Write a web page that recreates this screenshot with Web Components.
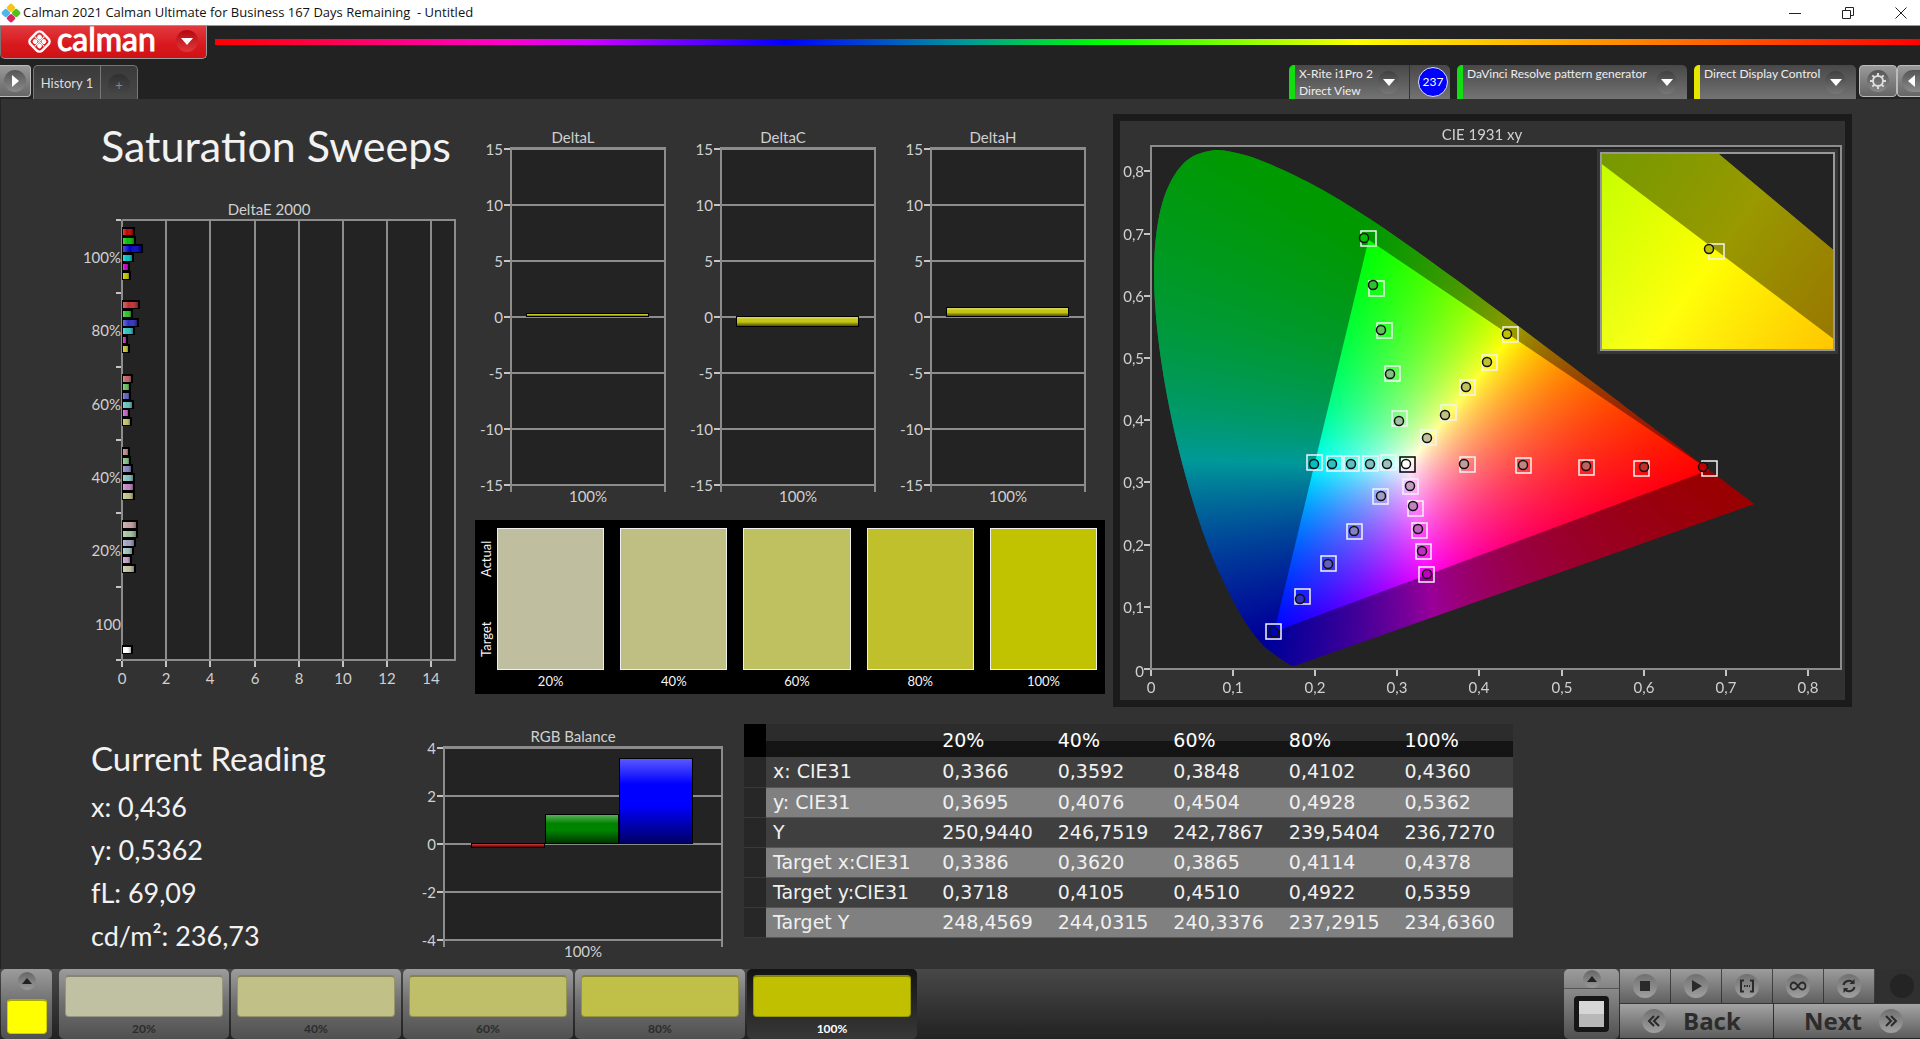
<!DOCTYPE html>
<html lang="en">
<head>
<meta charset="utf-8">
<title>Calman 2021 - Saturation Sweeps</title>
<style>
  body { margin: 0; background: #333; }
</style>
</head>
<body>
<cal-app></cal-app>
<script>
const UI = 'Lato, "Open Sans", sans-serif';

class CalElement extends HTMLElement {
  constructor() {
    super();
    this.attachShadow({ mode: 'open' });
  }
  connectedCallback() {
    this.shadowRoot.innerHTML = '<style>*{box-sizing:border-box}button{font:inherit;color:inherit;border:0;margin:0;padding:0;background:none}' +
      this.styles() + '</style>' + this.markup();
    this.ready();
  }
  styles() { return ''; }
  markup() { return ''; }
  ready() {}
}

/* colour of a sweep step: hue channels on/off, step 0 (20%) to 4 (100%) */
const HUES = { r: [1,0,0], g: [0,1,0], b: [0,0,1], c: [0,1,1], m: [1,0,1], y: [1,1,0] };
const REST = [158, 130, 96, 46, 0];
function sweep(hue, step) {
  if (hue === 'w') return 'rgb(255,255,255)';
  return 'rgb(' + HUES[hue].map(v => v ? 192 : REST[step]).join(',') + ')';
}

customElements.define('cal-titlebar', class extends CalElement {
  styles() { return `
    :host { display: flex; align-items: center; height: 26px; background: #fff; color: #111; border-bottom: 1px solid #999;
      box-sizing: content-box; font: 13px/25px "Open Sans", "Noto Sans", sans-serif; }
    .icon { margin: 0 2px 0 1px; display: block; }
    span { flex: 1; white-space: pre; }
    button { width: 53px; height: 25px; padding-right: 13px; display: grid; align-items: center; justify-items: end; }
  `; }
  markup() { return `
    <svg class="icon" width="20" height="20" viewBox="0 0 20 20">
      <rect x="6.500" y="1.300" width="7" height="7" rx="2" transform="rotate(45 10 4.800)" fill="#f5c518"/>
      <rect x="1.300" y="6.500" width="7" height="7" rx="2" transform="rotate(45 4.800 10)" fill="#4db8e8"/>
      <rect x="11.700" y="6.500" width="7" height="7" rx="2" transform="rotate(45 15.200 10)" fill="#4cc417"/>
      <rect x="6.500" y="11.700" width="7" height="7" rx="2" transform="rotate(45 10 15.200)" fill="#e0245e"/>
    </svg>
    <span>Calman 2021 Calman Ultimate for Business 167 Days Remaining  - Untitled</span>
    <button aria-label="Minimize"><svg width="12" height="12"><path d="M0 6.500H12" stroke="#222"/></svg></button>
    <button aria-label="Restore"><svg width="12" height="12" fill="none" stroke="#222"><path d="M.5 3.500H8.500V11.500H.5ZM3.500 3.500V.5H11.500V8.500H8.500"/></svg></button>
    <button aria-label="Close"><svg width="12" height="12" fill="none" stroke="#222"><path d="M.5.5 11.500 11.500M11.500.5.5 11.500"/></svg></button>
  `; }
});

customElements.define('cal-brandbar', class extends CalElement {
  styles() { return `
    :host { display: flex; align-items: flex-start; gap: 8px; height: 39px; background: #222; }
    button { flex: none; display: flex; align-items: center; width: 207px; height: 33px; padding: 0 8px 2px 25px; color: #fff;
      border: 1px solid #999; border-top: 0; border-left-color: #777; border-radius: 0 0 5px 5px;
      background: linear-gradient(#e23a3f, #d8181c 60%, #cf1216); font: 400 32px/32px Lato, sans-serif; }
    b { font-weight: 400; margin: 0 0 4px 4px; flex: 1; text-align: left; -webkit-text-stroke: 1px #fff; }
    i { width: 22px; height: 22px; border-radius: 50%; background: linear-gradient(#b3090d, #e0383c); display: grid; place-items: center; }
    .rainbow { flex: 1; height: 6px; margin-top: 13px;
      background: linear-gradient(90deg, #f00, #f0c 17%, #c0f 22%, #00f 33.500%, #099 44%, #0f0 52%, #ff0 67%, #f80 83%, #f00); }
  `; }
  markup() { return `
    <button aria-label="Calman menu">
      <svg width="27" height="27" viewBox="0 0 26 26">
        <g transform="rotate(45 13 13)" fill="#fff">
          <rect x="5" y="5" width="16" height="16" rx="4" fill="none" stroke="#fff" stroke-width="2.400"/>
          <circle cx="10" cy="10" r="2.300"/><circle cx="16" cy="10" r="2.300"/><circle cx="10" cy="16" r="2.300"/><circle cx="16" cy="16" r="2.300"/>
          <path d="M13 6.500V19.500M6.500 13H19.500" stroke="#fff" stroke-width="1"/>
        </g>
      </svg>
      <b>calman</b>
      <i><svg width="12" height="7"><path d="M0 0H12L6 7Z" fill="#fff"/></svg></i>
    </button>
    <div class="rainbow"></div>
  `; }
});

/* one device slot in the toolbar: coloured status strip, text, drop-down arrow */
customElements.define('cal-device', class extends CalElement {
  styles() { return `
    :host { display: flex; height: 34px; border-radius: 5px 5px 0 0; overflow: hidden; color: #eee;
      background: linear-gradient(#484848, #737373); border-left: 6px solid var(--status); font: 12px/17px ${UI}; }
    button { flex: 1; display: flex; justify-content: space-between; text-align: left; padding: 0 8px 0 4px; white-space: nowrap; }
    button { padding-right: 10px; }
    i { width: 21px; height: 23px; margin-top: 6px; border-radius: 50%; background: linear-gradient(#404040, #777); display: grid; place-items: center; }
  `; }
  markup() { return `
    <button><span><slot></slot></span><i><svg width="12" height="7"><path d="M0 0H12L6 7Z" fill="#fff"/></svg></i></button>
    <slot name="badge"></slot>
  `; }
});

customElements.define('cal-toolbar', class extends CalElement {
  styles() { return `
    :host { display: flex; align-items: flex-start; height: 34px; background: #222; color: #ddd; font: 13px/18px ${UI}; }
    .edge, .tool { display: grid; place-items: center; height: 32px; border: 1px solid #bbb; border-radius: 4px; background: linear-gradient(#999, #666); }
    .edge { width: 31px; border-left: 0; border-radius: 0 4px 4px 0; }
    .round { width: 22px; height: 22px; border-radius: 50%; background: linear-gradient(#555, #8a8a8a); display: grid; place-items: center; }
    .tabs { display: flex; height: 34px; margin-left: 2px; border: 1px solid #777; border-bottom: 0; border-radius: 5px 5px 0 0;
      background: linear-gradient(#3a3a3a, #484848); }
    .tabs button { width: 66px; }
    .tabs button + button { width: 37px; border-left: 1px solid #777; display: grid; place-items: center; }
    .tabs .round { background: linear-gradient(#303030, #484848); color: #888; margin-top: 5px; }
    .space { flex: 1; }
    .devices { display: flex; gap: 7px; }
    .meter { width: 161px; } .source { width: 230px; } .display { width: 162px; }
    .badge { flex: none; width: 41px; padding-left: 6px; border-left: 1px solid #333; display: grid; place-items: center; }
    .badge span { width: 30px; height: 30px; border-radius: 50%; border: 1px solid #ddf; background: #00f; color: #fff; font: 12px/28px ${UI}; text-align: center; }
    .gear { width: 38px; margin-left: 3px; }
    .last { width: 23px; border-right: 0; border-radius: 4px 0 0 4px; }
    .last .round { width: 18px; border-radius: 11px 0 0 11px; justify-self: end; }
  `; }
  markup() {
    let teeth = '';
    for (let a = 0; a < 360; a += 45) teeth += `<rect x="7" y="0" width="2" height="3" transform="rotate(${a} 8 8)" fill="#ddd"/>`;
    return `
    <button class="edge" aria-label="Expand"><span class="round"><svg width="7" height="12"><path d="M0 0 7 6 0 12Z" fill="#fff"/></svg></span></button>
    <div class="tabs"><button>History 1</button><button aria-label="Add tab"><span class="round">+</span></button></div>
    <div class="space"></div>
    <div class="devices">
      <cal-device class="meter" style="--status:#1d1">X-Rite i1Pro 2<br>Direct View<div slot="badge" class="badge"><span>237</span></div></cal-device>
      <cal-device class="source" style="--status:#1d1">DaVinci Resolve pattern generator</cal-device>
      <cal-device class="display" style="--status:#e6e600">Direct Display Control</cal-device>
    </div>
    <button class="tool gear" aria-label="Settings"><span class="round"><svg width="16" height="16">${teeth}<circle cx="8" cy="8" r="5" fill="none" stroke="#ddd" stroke-width="2"/></svg></span></button>
    <button class="tool last" aria-label="Collapse"><span class="round"><svg width="7" height="12"><path d="M7 0 0 6 7 12Z" fill="#fff"/></svg></span></button>
  `; }
});

const CHART = `
  :host { display: block; }
  svg { display: block; width: 100%; height: auto; font-family: ${UI}; font-size: 15px; fill: #d0d0d0; }
  line { stroke: #8c8c8c; stroke-width: 2; }
  .tick { stroke: #c4c4c4; }
  .end { text-anchor: end; } .mid { text-anchor: middle; }
`;

/* horizontal bars of DeltaE for each level */
customElements.define('cal-delta-e', class extends CalElement {
  styles() { return CHART; }
  markup() {
    const groups = [['100%', 4, [13,14,21,12,8,9]], ['80%', 3, [18,11,17,13,6,8]], ['60%', 2, [11,9,9,12,8,10]],
      ['40%', 1, [8,9,11,13,13,13]], ['20%', 0, [16,16,14,12,10,14]]];
    const L = 42, R = 375, T = 20, B = 460, pitch = (B - T) / 6, unit = 22.1;
    let s = `<rect x="${L}" y="${T}" width="${R - L}" height="${B - T}" fill="#232323"/>`;
    for (let v = 0; v < 15; v += 2) {
      const x = Math.round(L + v * unit);
      s += `<line x1="${x}" x2="${x}" y1="${T}" y2="${B}"/><line class="tick" x1="${x}" x2="${x}" y1="${B + 1}" y2="${B + 7}"/>
        <text class="mid" x="${x}" y="${B + 24}">${v}</text>`;
    }
    s += `<line x1="${L}" x2="${R}" y1="${T}" y2="${T}"/><line x1="${L}" x2="${R + 1}" y1="${B}" y2="${B}"/><line x1="${R}" x2="${R}" y1="${T - 1}" y2="${B}"/>`;
    for (let i = 0; i < 7; i++) {
      const y = Math.round(T + i * pitch);
      s += `<line class="tick" x1="${L - 6}" x2="${L - 1}" y1="${y}" y2="${y}"/>`;
    }
    const bar = (w, y, fill) => `<rect x="${L}" y="${y - 5}" width="${w}" height="9" fill="#000"/>
      <rect x="${L + 1}" y="${y - 3}" width="${w - 3}" height="6" fill="${fill}"/>
      <rect x="${L + 1}" y="${y - 3}" width="${w - 3}" height="6" fill="url(#shade)"/>`;
    groups.forEach(([name, step, list], g) => {
      s += `<text class="end" x="${L - 1}" y="${Math.round(T + g * pitch + 43)}">${name}</text>`;
      list.forEach((w, i) => { s += bar(w, Math.round(T + g * pitch + 12 + i * 8.7), sweep('rgbcmy'[i], step)); });
    });
    s += `<text class="end" x="${L - 1}" y="${Math.round(T + 5 * pitch + 43)}">100</text>` + bar(11, 450, '#fff');
    return `<svg viewBox="0 0 390 490"><defs><linearGradient id="shade"><stop offset="0" stop-color="#fff" stop-opacity=".3"/>
      <stop offset=".4" stop-color="#fff" stop-opacity="0"/><stop offset="1" stop-opacity=".35"/></linearGradient></defs>
      <text class="mid" x="189" y="15">DeltaE 2000</text>${s}</svg>`;
  }
});

/* vertical bars around a zero line */
customElements.define('cal-bars', class extends CalElement {
  styles() { return CHART; }
  markup() {
    const d = JSON.parse(this.dataset.chart);
    const { w, h, left: L, right: R, bottom: B, max, step } = d, T = 21, zero = (T + B) / 2, unit = (B - T) / 2 / max;
    let s = `<rect x="${L}" y="${T}" width="${R - L}" height="${B - T}" fill="#232323"/>`;
    for (let v = max; v >= -max; v -= step) {
      const y = Math.round(zero - v * unit);
      s += `<line x1="${L}" x2="${R}" y1="${y}" y2="${y}"/><line class="tick" x1="${L - 7}" x2="${L - 1}" y1="${y}" y2="${y}"/>
        <text class="end" x="${L - 8}" y="${y + 6}">${v}</text>`;
    }
    s += `<line x1="${L}" x2="${L}" y1="${T - 2}" y2="${B + 7}"/><line x1="${R}" x2="${R}" y1="${T - 2}" y2="${B + 7}"/>
      <line x1="${L}" x2="${R}" y1="${T - 1}" y2="${T - 1}"/>`;
    d.bars.forEach(([x, width, v, fill]) => {
      const top = Math.round(v > 0 ? zero - v * unit : zero), ht = Math.max(2, Math.round(Math.abs(v) * unit) - 1);
      s += `<rect x="${x}" y="${top - 1}" width="${width}" height="${ht + 2}" fill="#000"/>
        <rect x="${x + 1}" y="${top}" width="${width - 2}" height="${ht}" fill="${fill}"/>
        <rect x="${x + 1}" y="${top}" width="${width - 2}" height="${ht}" fill="url(#gloss)"/>`;
    });
    return `<svg viewBox="0 0 ${w} ${h}"><defs><linearGradient id="gloss" x2="0" y2="1"><stop offset="0" stop-color="#fff" stop-opacity=".35"/>
      <stop offset=".3" stop-color="#fff" stop-opacity="0"/><stop offset=".55" stop-opacity="0"/><stop offset="1" stop-opacity=".6"/></linearGradient></defs>
      <text class="mid" x="${d.titleX}" y="15">${d.title}</text>${s}
      <text class="mid" x="${(L + R) / 2}" y="${B + 17}">100%</text></svg>`;
  }
});

customElements.define('cal-swatches', class extends CalElement {
  styles() { return `
    :host { display: flex; height: 174px; padding: 8px 8px 0 0; background: #000; color: #f6f6f6; font: 13px/17px ${UI}; }
    .side { width: 22px; display: flex; flex-direction: column; }
    .side span { height: 98px; line-height: 22px; writing-mode: vertical-rl; transform: rotate(180deg); text-align: center; }
    .side span:first-child { height: 62px; }
    .row { flex: 1; display: flex; gap: 16px; }
    figure { flex: 1; margin: 0; text-align: center; }
    .chip { height: 142px; margin-bottom: 3px; border: 1px solid #eee; background: var(--c); }
  `; }
  markup() {
    const list = [['20%', '#bfbf9f'], ['40%', '#bfbf83'], ['60%', '#bfc060'], ['80%', '#bfc02c'], ['100%', '#c2c300']];
    return `<div class="side"><span>Actual</span><span>Target</span></div><div class="row">` +
      list.map(([n, c]) => `<figure><div class="chip" style="--c:${c}"></div><figcaption>${n}</figcaption></figure>`).join('') + `</div>`;
  }
});

/* chromaticity chart: the colour field is painted on a canvas, axes and markers are SVG above it */
const LOCUS = [[.1741,.005],[.1714,.0051],[.1644,.0109],[.1566,.0177],[.144,.0297],[.1355,.0399],[.1241,.0578],[.1096,.0868],[.0913,.1327],
  [.0687,.2007],[.0454,.295],[.0235,.4127],[.0082,.5384],[.0039,.6548],[.0139,.7502],[.0389,.812],[.0743,.8338],[.1142,.8262],[.1547,.8059],
  [.1929,.7816],[.2296,.7543],[.2658,.7243],[.3016,.6923],[.3373,.6589],[.3731,.6245],[.4087,.5896],[.4441,.5547],[.4788,.5202],[.5125,.4866],
  [.5448,.4544],[.5752,.4242],[.627,.3725],[.6658,.334],[.6915,.3083],[.719,.2809],[.7347,.2653]];
const GAMUT = [[.68, .32], [.265, .69], [.15, .06]];

function chromaColor(x, y) {
  y = Math.max(y, 1e-4);
  const X = x / y, Z = (1 - x - y) / y;
  const c = [2.4935 * X - .9314 - .4027 * Z, -.8295 * X + 1.7627 + .0236 * Z, .0358 * X - .0762 + .9569 * Z].map(v => Math.max(v, 0));
  const m = Math.max(...c) || 1;
  return c.map(v => 255 * v / m);
}

function paintField(ctx, rect, view) {
  const [px, py, w, h] = rect, [x0, x1, y0, y1] = view;
  const off = document.createElement('canvas');
  off.width = w; off.height = h;
  const o = off.getContext('2d'), img = o.createImageData(w, h);
  for (let j = 0, k = 0; j < h; j++) for (let i = 0; i < w; i++, k += 4) {
    const c = chromaColor(x0 + (x1 - x0) * i / w, y1 - (y1 - y0) * j / h);
    img.data[k] = c[0]; img.data[k + 1] = c[1]; img.data[k + 2] = c[2]; img.data[k + 3] = 255;
  }
  o.putImageData(img, 0, 0);
  const P = ([x, y]) => [px + (x - x0) / (x1 - x0) * w, py + (y1 - y) / (y1 - y0) * h];
  ctx.save();
  ctx.beginPath(); ctx.rect(px, py, w, h); ctx.clip();
  ctx.fillStyle = '#232323'; ctx.fillRect(px, py, w, h);
  ctx.beginPath();
  const p = LOCUS.map(P);
  ctx.moveTo(...p[0]);
  for (let i = 0; i < p.length - 1; i++) {
    const a = p[Math.max(i - 1, 0)], b = p[i], c = p[i + 1], d = p[Math.min(i + 2, p.length - 1)];
    ctx.bezierCurveTo(b[0] + (c[0] - a[0]) / 6, b[1] + (c[1] - a[1]) / 6, c[0] - (d[0] - b[0]) / 6, c[1] - (d[1] - b[1]) / 6, c[0], c[1]);
  }
  ctx.closePath(); ctx.clip();
  ctx.drawImage(off, px, py);
  ctx.fillStyle = 'rgba(0,0,0,.4)'; ctx.fillRect(px, py, w, h);
  ctx.beginPath(); GAMUT.map(P).forEach(q => ctx.lineTo(...q)); ctx.closePath(); ctx.clip();
  ctx.drawImage(off, px, py);
  ctx.restore();
}

customElements.define('cal-cie', class extends CalElement {
  styles() { return CHART + `
    :host { display: grid; border: 7px solid #1b1b1b; background: #323232; }
    canvas, svg { grid-area: 1 / 1; display: block; width: 100%; height: auto; }
  `; }
  markup() {
    /* per hue, from 20% to 100%: target x, target y, measured x, measured y */
    const marks = {
      g: [[279,297,279,300],[272,252,270,253],[264,209,261,209],[256,167,253,164],[248,117,244,117]],
      y: [[308,316,307,317],[328,291,325,294],[347,266,346,266],[369,241,367,241],[390,213,387,213]],
      c: [[268,341,267,343],[250,342,250,343],[231,342,231,343],[214,342,212,343],[194,341,194,343]],
      b: [[260,375,261,375],[234,410,234,410],[208,442,208,443],[182,475,180,478],[153,510,154,511]],
      m: [[290,365,290,365],[295,387,293,385],[299,409,298,408],[303,430,302,430],[306,453,307,453]],
      r: [[347,343,344,343],[403,344,403,344],[466,346,466,345],[521,347,524,346],[589,347,583,346]]
    };
    const mark = (q, hue, step, edge) => `<rect x="${q[0] - 7}" y="${q[1] - 7}" width="15" height="15" fill="none" stroke="${edge}" stroke-width="1.500"/>
      <circle cx="${q[2]}" cy="${q[3]}" r="4.500" fill="${sweep(hue, step)}" stroke="#111" stroke-width="1.500"/>`;
    let s = '';
    for (let i = 0; i < 9; i++) {
      const x = Math.round(31 + i * 82.1), y = Math.round(548 - i * 62.2), t = i ? '0,' + i : '0';
      s += `<line class="tick" x1="${x}" x2="${x}" y1="549" y2="555"/><text class="mid" x="${x}" y="572">${t}</text>
        <line class="tick" x1="24" x2="30" y1="${y}" y2="${y}"/><text class="end" x="24" y="${y + (i ? 6 : 8)}">${t}</text>`;
    }
    for (const h in marks) marks[h].forEach((q, i) => { s += mark(q, h, i, '#f4f4f4'); });
    s += mark([287,343,286,343], 'w', 0, '#000');
    return `<canvas width="725" height="579"></canvas><svg viewBox="0 0 725 579">
      <text class="mid" x="362" y="19">CIE 1931 xy</text>
      <rect x="31" y="25" width="690" height="523" fill="none" stroke="#8c8c8c" stroke-width="2"/>
      <rect x="479" y="30" width="237" height="201" fill="none" stroke="#363636" stroke-width="4"/>
      <rect x="481" y="32" width="233" height="197" fill="none" stroke="#999" stroke-width="2"/>
      ${s}${mark([596,130,589,128], 'y', 4, '#f4f4f4')}</svg>`;
  }
  ready() {
    const ctx = this.shadowRoot.querySelector('canvas').getContext('2d');
    paintField(ctx, [31, 25, 690, 523], [0, 690 / 821, 0, 523 / 622]);
    paintField(ctx, [481, 32, 233, 197], [.4378 - .025, .4378 + .025, .5359 - .025, .5359 + .025]);
  }
});

customElements.define('cal-reading', class extends CalElement {
  styles() { return `
    :host { display: block; color: #f2f2f2; font: 27px/43px ${UI}; }
    h2 { margin: 0 0 9px; font: 33px/36px ${UI}; }
    p { margin: 0; white-space: nowrap; }
  `; }
  markup() { return `<h2>Current Reading</h2><p>x: 0,436</p><p>y: 0,5362</p><p>fL: 69,09</p><p>cd/m²: 236,73</p>`; }
});

customElements.define('cal-table', class extends CalElement {
  styles() { return `
    :host { display: block; }
    table { width: 100%; table-layout: fixed; border-collapse: collapse; color: #f0f0f0; font: 19px/29px "DejaVu Sans", "Noto Sans", sans-serif; white-space: nowrap; }
    th, td { padding: 0 0 0 7px; height: 30px; font-weight: 400; text-align: left; border-bottom: 1px solid #555; }
    thead th { height: 33px; border: 0; color: #fff; background: linear-gradient(#2c2c2c 50%, #151515 52%, #141414); }
    thead .grip { background: #000; }
    .grip { padding: 0; background: #272727; border-color: #3a3a3a; }
    tbody tr { background: #3f3f3f; }
    tbody tr:nth-child(even) { background: #808080; }
    .g { width: 22px; } .n { width: 22%; }
  `; }
  markup() {
    const rows = [['x: CIE31','0,3366','0,3592','0,3848','0,4102','0,4360'], ['y: CIE31','0,3695','0,4076','0,4504','0,4928','0,5362'],
      ['Y','250,9440','246,7519','242,7867','239,5404','236,7270'], ['Target x:CIE31','0,3386','0,3620','0,3865','0,4114','0,4378'],
      ['Target y:CIE31','0,3718','0,4105','0,4510','0,4922','0,5359'], ['Target Y','248,4569','244,0315','240,3376','237,2915','234,6360']];
    return `<table><colgroup><col class="g"><col class="n"><col span="5"></colgroup><thead><tr><th class="grip"></th><th></th>` +
      ['20%','40%','60%','80%','100%'].map(t => `<th scope="col">${t}</th>`).join('') + `</tr></thead><tbody>` +
      rows.map(r => `<tr><td class="grip"></td><th scope="row">${r[0]}</th>` + r.slice(1).map(t => `<td>${t}</td>`).join('') + `</tr>`).join('') +
      `</tbody></table>`;
  }
});

customElements.define('cal-footer', class extends CalElement {
  styles() { return `
    :host { display: flex; height: 70px; padding-left: 1px; background: linear-gradient(#484848, #222); font: 700 12px/16px ${UI}; color: #2c2c2c; }
    button, .stack, .tile { background: linear-gradient(#9c9c9c, #6e6e6e 50%, #505050); }
    .picker { width: 51px; margin-right: 7px; padding: 3px 0 5px; border-radius: 5px; display: flex; flex-direction: column; align-items: center; justify-content: space-between; }
    .knob { width: 18px; height: 18px; border-radius: 50%; background: linear-gradient(#666, #9a9a9a); display: grid; place-items: center; }
    .picker .color { width: 40px; height: 35px; border-radius: 4px; background: #ff0; border: 1px solid #cc0; border-top: 2px solid #aa0; }
    .tiles { display: flex; gap: 2px; }
    .tile { width: 170px; padding: 6px 6px 2px; border-radius: 5px; display: flex; flex-direction: column; justify-content: space-between; align-items: stretch; text-align: center; }
    .tile i { display: block; height: 42px; border-radius: 4px; background: var(--c); border: 1px solid rgba(0,0,0,.22); border-top: 2px solid rgba(0,0,0,.3); }
    .tile.on { background: linear-gradient(#141414, #383838); color: #fff; }
    .space { flex: 1; }
    .target { width: 55px; display: flex; flex-direction: column; }
    .target button { height: 20px; display: grid; place-items: center; border-radius: 5px 5px 0 0; background: linear-gradient(#9c9c9c, #848484); border-bottom: 1px solid #555; }
    .target .box { flex: 1; padding: 7px 10px; background: linear-gradient(#8a8a8a, #505050); border-radius: 0 0 5px 5px; }
    .target .box i { display: block; height: 36px; border: 5px solid #161616; border-radius: 4px; background: linear-gradient(#d6d6d6 50%, #b8b8b8 50%); }
    .panel { width: 300px; display: flex; flex-direction: column; gap: 1px; padding-bottom: 1px; margin-left: 1px; overflow: hidden; }
    .row { display: flex; flex: 1; gap: 1px; }
    .row button { display: grid; place-items: center; }
    .row .ctl { width: 50px; background: linear-gradient(#9c9c9c, #606060); }
    .ring { width: 24px; height: 24px; border-radius: 50%; background: linear-gradient(#707070, #a0a0a0); display: grid; place-items: center; }
    .off { flex: 1; display: grid; place-items: center; padding-left: 8px; background: #303030; }
    .off .ring { background: #242424; }
    .row .nav { background: linear-gradient(#a4a4a4, #5c5c5c); display: flex; align-items: center; font: 700 24px/34px "Open Sans", sans-serif; }
    .row .back { width: 153px; gap: 17px; padding-left: 22px; }
    .row .next { flex: 1; gap: 17px; padding-left: 30px; }
  `; }
  markup() {
    const tiles = [['20%', '#c0c1a2'], ['40%', '#c1c087'], ['60%', '#c0bf69'], ['80%', '#c0bf47'], ['100%', '#c0c000']];
    const ic = body => `<span class="ring"><svg width="18" height="18" fill="none" stroke="#2a2a2a" stroke-width="2">${body}</svg></span>`;
    const up = `<span class="knob"><svg width="10" height="6"><path d="M0 6H10L5 0Z" fill="#222"/></svg></span>`;
    return `
    <button class="picker" aria-label="Pick colour">${up}<span class="color"></span></button>
    <div class="tiles">${tiles.map(([n, c], i) => `<button class="tile${i === 4 ? ' on' : ''}"><i style="--c:${c}"></i>${n}</button>`).join('')}</div>
    <div class="space"></div>
    <div class="target"><button aria-label="Show target">${up}</button><div class="box"><i></i></div></div>
    <div class="panel">
      <div class="row">
        <button class="ctl" aria-label="Stop">${ic('<path d="M5 5H13V13H5Z" fill="#2a2a2a"/>')}</button>
        <button class="ctl" aria-label="Play">${ic('<path d="M5 3 15 9 5 15Z" fill="#2a2a2a" stroke="none"/>')}</button>
        <button class="ctl" aria-label="Read series">${ic('<path d="M6 3.500H3V14.500H6M12 3.500H15V14.500H12"/><path d="M6 9H12" stroke-dasharray="1.500 1"/>')}</button>
        <button class="ctl" aria-label="Continuous">${ic('<path d="M9 9C7 6 5.500 5.500 4.500 5.500A3 3.500 0 0 0 4.500 12.500C5.500 12.500 7 12 9 9S12.500 5.500 13.500 5.500A3 3.500 0 0 1 13.500 12.500C12.500 12.500 11 12 9 9" stroke-width="1.800"/>')}</button>
        <button class="ctl" aria-label="Repeat">${ic('<path d="M3.500 8A5.500 5 0 0 1 13 5.500M14.500 10A5.500 5 0 0 1 5 12.500"/><path d="M14.500 2V7H9.500ZM3.500 16V11H8.500Z" fill="#2a2a2a" stroke="none"/>')}</button>
        <div class="off"><span class="ring"></span></div>
      </div>
      <div class="row">
        <button class="nav back">${ic('<path d="M9 4 4 9 9 14M14 4 9 9 14 14"/>')}Back</button>
        <button class="nav next">Next${ic('<path d="M4 4 9 9 4 14M9 4 14 9 9 14"/>')}</button>
      </div>
    </div>`;
  }
});

customElements.define('cal-app', class extends CalElement {
  styles() { return `
    :host { display: flex; flex-direction: column; min-height: 100vh; background: #323232; }
    main { flex: 1; border-left: 1px solid #222; }
    .top, .low { display: grid; margin-left: -1px; }
    .top { grid-template-columns: 475fr 638fr 807fr; align-items: start; }
    .low { grid-template-columns: 420fr 324fr 1176fr; align-items: start; margin-top: 16px; }
    h1 { margin: 21px 0 28px 101px; font: 43px/52px ${UI}; color: #f2f2f2; white-space: nowrap; }
    cal-delta-e { margin: 0 5px 0 80px; }
    .deltas { display: grid; grid-template-columns: repeat(3, 1fr); margin: 29px 8px 12px 0; }
    cal-swatches { margin-right: 8px; }
    cal-cie { margin: 15px 68px 0 0; }
    cal-reading { margin: 17px 0 0 91px; }
    .rgb { margin: 4px 9px 0 0; }
    cal-table { margin: 1px 407px 0 0; }
  `; }
  markup() {
    const delta = (title, v) => `<cal-bars data-chart='${JSON.stringify({ title, titleX: 98, w: 210, h: 380, left: 36, right: 190, bottom: 357, max: 15, step: 5,
      bars: [[51, 123, v, '#c4c414']] })}'></cal-bars>`;
    const rgb = JSON.stringify({ title: 'RGB Balance', titleX: 153, w: 315, h: 237, left: 24, right: 302, bottom: 213, max: 4, step: 2,
      bars: [[51, 74, -.15, '#b01010'], [125, 74, 1.2, '#008400'], [199, 74, 3.55, '#0000ff']] });
    return `
    <cal-titlebar></cal-titlebar>
    <cal-brandbar></cal-brandbar>
    <cal-toolbar></cal-toolbar>
    <main>
      <div class="top">
        <section><h1>Saturation Sweeps</h1><cal-delta-e></cal-delta-e></section>
        <section><div class="deltas">${delta('DeltaL', .25)}${delta('DeltaC', -.85)}${delta('DeltaH', .8)}</div><cal-swatches></cal-swatches></section>
        <cal-cie></cal-cie>
      </div>
      <div class="low">
        <cal-reading></cal-reading>
        <cal-bars class="rgb" data-chart='${rgb}'></cal-bars>
        <cal-table></cal-table>
      </div>
    </main>
    <cal-footer></cal-footer>`;
  }
});
</script>
</body>
</html>
